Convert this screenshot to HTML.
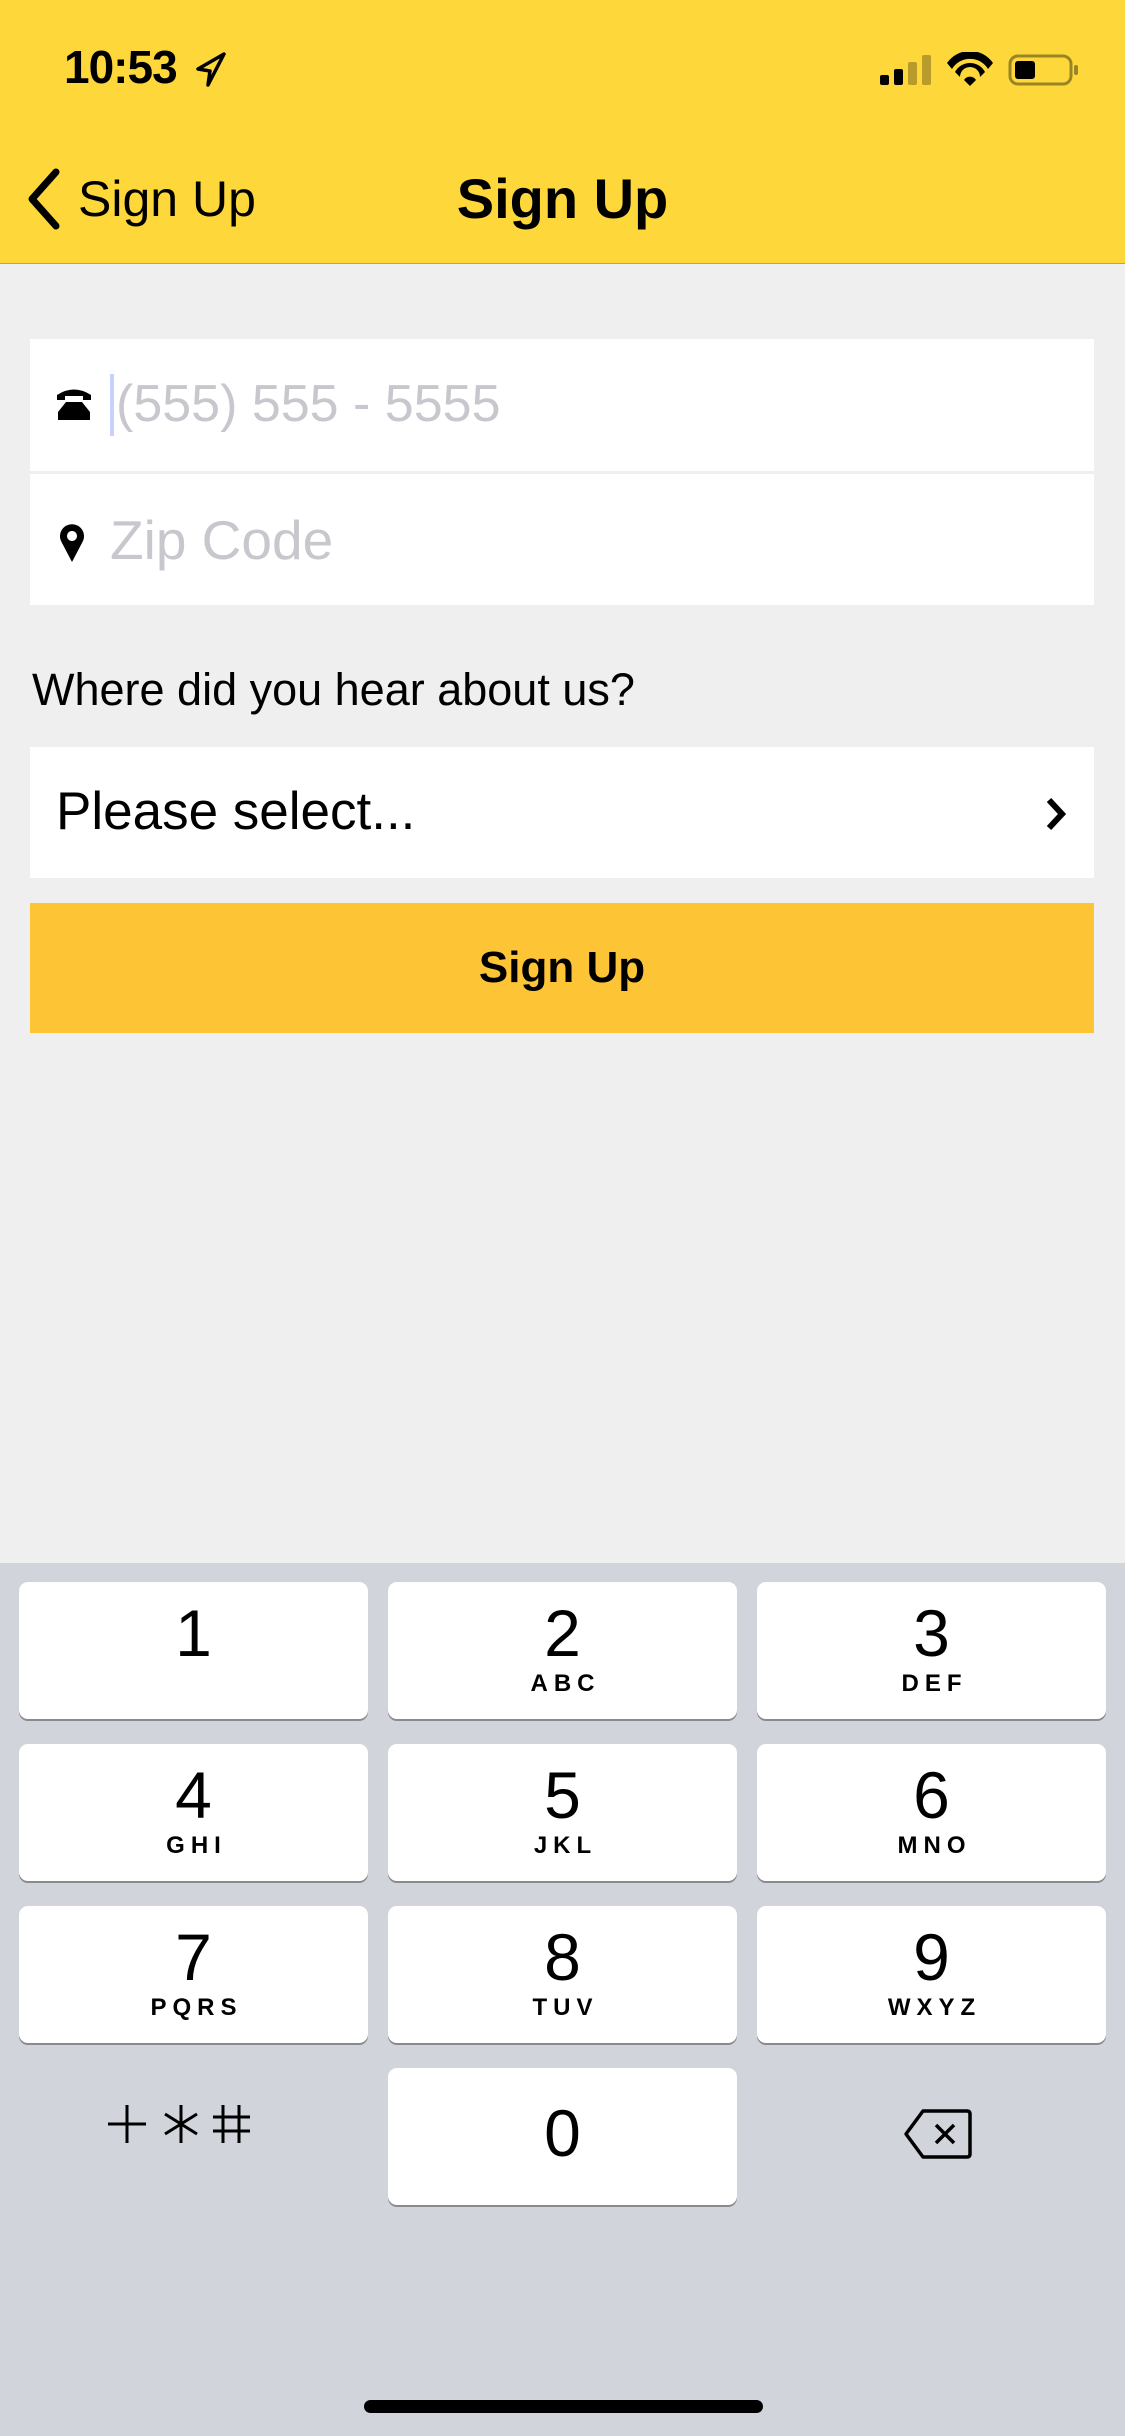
<!DOCTYPE html>
<html><head><meta charset="utf-8"><style>
*{margin:0;padding:0;box-sizing:border-box}
body{width:1125px;height:2436px;position:relative;overflow:hidden;font-family:"Liberation Sans",sans-serif;background:#efefef}
.abs{position:absolute}
.nav{left:0;top:0;width:1125px;height:264px;background:#fed73a;border-bottom:1px solid #b9a54a}
.field{left:30px;width:1064px;background:#fff}
.key{position:absolute;width:349px;height:137px;background:#fff;border-radius:9px;box-shadow:0 2px 0 #898a8d;text-align:center}
.key .d{font-size:66px;line-height:66px;padding-top:18px;color:#000}
.key .l{font-size:24px;font-weight:bold;letter-spacing:6px;margin-top:4px;padding-left:6px}
</style></head><body>
<div class="abs nav">
 <div class="abs" style="left:64px;top:40px;font-size:46px;font-weight:bold;letter-spacing:-1px">10:53</div>
 <svg class="abs" style="left:196px;top:52px" width="30" height="36" viewBox="0 0 30 36"><path d="M28 2 L2 17 L14 19 L12 33 Z" fill="none" stroke="#000" stroke-width="3.5" stroke-linejoin="round"/></svg>
 <svg class="abs" style="left:880px;top:52px" width="200" height="36" viewBox="0 0 200 36">
  <rect x="0" y="23" width="9" height="10" rx="2"/><rect x="14" y="17" width="9" height="16" rx="2"/><rect x="28" y="10" width="9" height="23" rx="2" fill="#b89b2a"/><rect x="42" y="3" width="9" height="30" rx="2" fill="#b89b2a"/>
  <path d="M67 11 A28 28 0 0 1 113 11 L108 17 A21 21 0 0 0 72 17 Z"/><path d="M75 20 A17 17 0 0 1 105 20 L100 25 A10 10 0 0 0 80 25 Z"/><path d="M84 28 L90 34 L96 28 A7 7 0 0 0 84 28Z"/>
  <rect x="130" y="4" width="61" height="28" rx="8" fill="none" stroke="#9a8526" stroke-width="3"/><rect x="135" y="9" width="20" height="18" rx="3"/><rect x="194" y="13" width="4" height="10" rx="2" fill="#9a8526"/>
 </svg>
 <svg class="abs" style="left:26px;top:168px" width="36" height="62" viewBox="0 0 36 62"><path d="M30 4 L6 31 L30 58" fill="none" stroke="#000" stroke-width="7" stroke-linecap="round" stroke-linejoin="round"/></svg>
 <div class="abs" style="left:78px;top:170px;font-size:50px">Sign Up</div>
 <div class="abs" style="left:0;width:1125px;top:166px;text-align:center;font-size:56px;font-weight:bold">Sign Up</div>
</div>
<div class="abs field" style="top:339px;height:132px"></div>
<div class="abs field" style="top:474px;height:131px"></div>
<svg class="abs" style="left:54px;top:386px" width="40" height="36" viewBox="0 0 40 36"><path d="M3 9 Q20 -2 37 9 L37 14 L29 14 L29 10 L11 10 L11 14 L3 14Z M12 16 L28 16 L36 26 L36 34 L4 34 L4 26Z"/></svg>
<div class="abs" style="left:110px;top:374px;width:4px;height:62px;background:#c6d2fb"></div>
<div class="abs" style="left:116px;top:374px;font-size:52px;color:#c7c7cd">(555) 555 - 5555</div>
<svg class="abs" style="left:58px;top:522px" width="28" height="42" viewBox="0 0 28 42"><path d="M14 40 L3 19 A12 12 0 1 1 25 19 Z M14 9 A5 5 0 1 0 14.01 9 Z" fill-rule="evenodd"/></svg>
<div class="abs" style="left:110px;top:508px;font-size:55px;color:#c7c7cd">Zip Code</div>
<div class="abs" style="left:32px;top:664px;font-size:45px">Where did you hear about us?</div>
<div class="abs field" style="top:747px;height:131px"></div>
<div class="abs" style="left:56px;top:781px;font-size:53px">Please select...</div>
<svg class="abs" style="left:1045px;top:797px" width="22" height="34" viewBox="0 0 22 34"><path d="M4 3 L17 17 L4 31" fill="none" stroke="#000" stroke-width="6"/></svg>
<div class="abs" style="left:30px;top:903px;width:1064px;height:130px;background:#fdc535;text-align:center;font-size:44px;font-weight:bold;line-height:130px">Sign Up</div>
<div class="abs" style="left:0;top:1563px;width:1125px;height:873px;background:#d1d4db">
 <div class="key" style="left:19px;top:19px"><div class="d">1</div></div>
 <div class="key" style="left:388px;top:19px"><div class="d">2</div><div class="l">ABC</div></div>
 <div class="key" style="left:757px;top:19px"><div class="d">3</div><div class="l">DEF</div></div>
 <div class="key" style="left:19px;top:181px"><div class="d">4</div><div class="l">GHI</div></div>
 <div class="key" style="left:388px;top:181px"><div class="d">5</div><div class="l">JKL</div></div>
 <div class="key" style="left:757px;top:181px"><div class="d">6</div><div class="l">MNO</div></div>
 <div class="key" style="left:19px;top:343px"><div class="d">7</div><div class="l">PQRS</div></div>
 <div class="key" style="left:388px;top:343px"><div class="d">8</div><div class="l">TUV</div></div>
 <div class="key" style="left:757px;top:343px"><div class="d">9</div><div class="l">WXYZ</div></div>
 <div class="key" style="left:388px;top:505px"><div class="d" style="padding-top:32px">0</div></div>
 <svg class="abs" style="left:106px;top:538px" width="150" height="46" viewBox="0 0 150 46" fill="none" stroke="#000" stroke-width="3">
  <path d="M2 23 H40 M21 4 V42"/>
  <path d="M75 4 V42 M59 13 L91 33 M91 13 L59 33"/>
  <path d="M117 4 V42 M133 4 V42 M107 16 H144 M107 30 H144"/>
 </svg>
 <svg class="abs" style="left:903px;top:545px" width="70" height="52" viewBox="0 0 70 52"><path d="M20 3 L64 3 Q67 3 67 6 L67 46 Q67 49 64 49 L20 49 L3 26 Z" fill="none" stroke="#000" stroke-width="3.5" stroke-linejoin="round"/><path d="M33 17 L51 35 M51 17 L33 35" stroke="#000" stroke-width="3.5"/></svg>
 <div class="abs" style="left:364px;top:837px;width:399px;height:13px;border-radius:7px;background:#000"></div>
</div>
</body></html>
